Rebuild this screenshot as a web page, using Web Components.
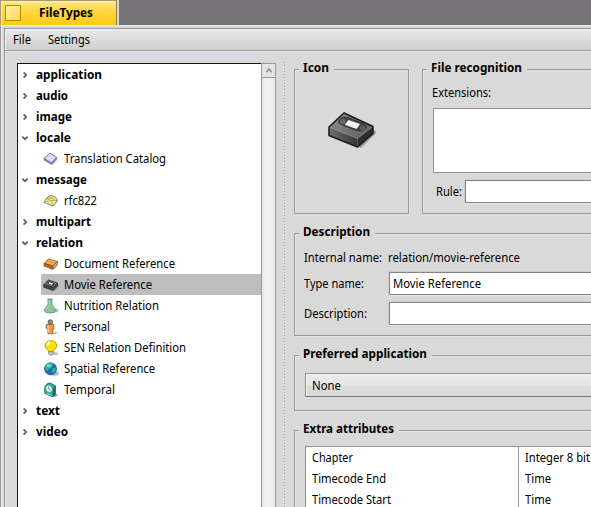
<!DOCTYPE html>
<html lang="en"><head><meta charset="utf-8"><title>FileTypes</title>
<style>
html,body{margin:0;height:507px;overflow:hidden}
body{font:12px/21px "Noto Sans","Open Sans",sans-serif;color:#000;background:#767477}
</style></head><body><ft-window></ft-window>
<script>
const define=(name,html,setup)=>customElements.define(name,class extends HTMLElement{
  connectedCallback(){
    if(this.shadowRoot)return;
    this.attachShadow({mode:'open'}).innerHTML=html;
    if(setup)setup.call(this,this.shadowRoot);
  }
});

// A label condensed horizontally to the width given in its w attribute.
define('ft-text','<style>:host{display:block;white-space:nowrap;flex:none}span{display:inline-block;transform-origin:0 50%;vertical-align:top}:host([b]){font-weight:700}</style><span><slot></slot></span>',function(r){
  const w=+this.getAttribute('w'),s=r.querySelector('span');
  this.style.width=w+'px';
  s.style.transform=`scaleX(${w/s.getBoundingClientRect().width})`;
});

const icons={
catalog:'<path d="M2 8 7 2 14 7 9 13Z" fill="#8d8da0" opacity=".45" transform="translate(1 1)"/><path d="M1 7.5 7 2 13.5 6.5 8.5 12Z" fill="#dcdcfb" stroke="#75759b"/><path d="M1 7.5 8.5 12 13.5 6.5V8L8.5 13.5 1 9Z" fill="#9b9bcc" stroke="#606080" stroke-width=".6"/>',
mail:'<path d="M3 9 15 8 10 14Z" fill="#999" opacity=".5"/><path d="M.8 9.3 3.5 5 8 2.3 12.5 4 14.5 7.5 9.8 13Z" fill="#eeee9a" stroke="#79794a" stroke-width=".9"/><path d="M1 9.3 8 7.5 9.8 13M8 7.5 14 7.5M4 5.5 10 4.2M4 7 8.5 5.5 12 6.5" fill="none" stroke="#a3a35b" stroke-width=".8"/>',
book:'<path d="M5 13 15 7 15 10 10 14Z" fill="#888" opacity=".5"/><path d="M1 7.5 5.5 3 14.5 5.5 10 10Z" fill="#e9a044" stroke="#875017" stroke-width=".8"/><path d="M1 7.5V10L9.7 13V10Z" fill="#c36d24" stroke="#784111" stroke-width=".7"/><path d="M10 10 14.5 5.5V8L10 13Z" fill="#e0b47c" stroke="#85531f" stroke-width=".7"/><path d="M4 6.5 10 8.5M7 4 12 6" stroke="#ffcc80" stroke-width=".6"/>',
tape:'<path d="M10 14 15.5 8V10L11 14Z" fill="#666" opacity=".5"/><path d="M.8 7.5 5.5 3 14.5 6 10.3 10.5Z" fill="#808080" stroke="#222" stroke-width=".8"/><path d="M.8 7.5V10.3L10 13.5 14.5 9V6L10.3 10.5Z" fill="#4a4a4a" stroke="#222" stroke-width=".7"/><ellipse cx="7.8" cy="6.5" rx="4" ry="1.7" transform="rotate(18 7.8 6.5)" fill="#444"/><path d="M6.4 5.3 10 6.4 9 7.8 5.6 6.7Z" fill="#eee"/>',
flask:'<ellipse cx="11.5" cy="12.5" rx="4" ry="2" fill="#777" opacity=".5"/><path d="M5 1.2H9V6.5L13 12.5Q11.5 15 7 15 2 15 1 12.5L5 6.5Z" fill="#8bc49e" stroke="#549370" stroke-width=".8"/><path d="M6.3 2V7L3 12" fill="none" stroke="#a9d7b6" stroke-width="1.2"/><path d="M4.3 1.2H9.7" stroke="#79a78b"/>',
person:'<path d="M8 14 15 12.8 13 15H6Z" fill="#777" opacity=".55"/><path d="M3.3 5.3H10.7L11 10 9.8 10.5V14.7H5V10.5L3 9Z" fill="#ee9840" stroke="#8e521a" stroke-width=".8"/><path d="M5.2 6V9.8L6 14" stroke="#ffc688" fill="none" stroke-width="1.3"/><circle cx="7.3" cy="3" r="2.3" fill="#97847a" stroke="#554b45" stroke-width=".7"/>',
bulb:'<ellipse cx="12" cy="13.5" rx="3" ry="1.5" fill="#888" opacity=".5"/><path d="M5.6 11.8C5.6 9.5 2 8.7 2 5.8A5.9 5.2 0 0 1 13.8 5.8C13.8 8.7 10.2 9.5 10.2 11.8Z" fill="#ffe200" stroke="#a88500" stroke-width=".8"/><path d="M4.5 5.5Q4.7 3 7 2.3" fill="none" stroke="#fffce0" stroke-width="2"/><path d="M5.7 11.7H10.3V14L8 15.5 5.7 14Z" fill="#c9c9c9" stroke="#777" stroke-width=".7"/>',
globe:'<ellipse cx="11.5" cy="12.3" rx="4.2" ry="2.5" fill="#888" opacity=".6"/><circle cx="7.5" cy="7.8" r="6" fill="#146ec1" stroke="#17477a" stroke-width=".7"/><path d="M2.5 4.8Q5 1 10 2.3L9 6 6.5 7.5 3.7 10 2 8ZM9 8 12.7 6.5Q13.5 9.5 11 11.8L8.5 11Z" fill="#27b98b"/><ellipse cx="5.7" cy="4.5" rx="2.4" ry="1.7" fill="#86efc6" opacity=".7"/>',
clock:'<path d="M8 14 14.5 11.5V14L11 15Z" fill="#777" opacity=".6"/><path d="M1.7 5Q3.5.8 7.3 1L12.5 3.8V12.5L10 15 1.7 11.3Z" fill="#32a398" stroke="#176b66" stroke-width=".8"/><path d="M9.8 6.3 12.5 4V12.5L10 15Z" fill="#17726c"/><ellipse cx="6" cy="6.8" rx="3.1" ry="3.7" transform="rotate(-20 6 6.8)" fill="#d9f4f5" stroke="#5b9da2" stroke-width=".7"/><path d="M5.8 4.5V7L7.6 8" fill="none" stroke="#667" stroke-width=".8"/><path d="M3.5 11.3 8.5 13.2" stroke="#8de1d3"/>'};
define('ft-icon','<style>:host{display:block;width:16px;height:16px;flex:none}svg{display:block}</style><svg width="16" height="16" viewBox="0 0 16 16"></svg>',function(r){r.querySelector('svg').innerHTML=icons[this.getAttribute('name')]});

// Collapsible category heading
define('ft-category','<style>:host{display:flex;align-items:center;height:21px;padding-left:3px}svg{width:8px;height:8px;margin-right:7px;flex:none}:host([open]) svg{transform:rotate(90deg)}</style><svg viewBox="0 0 8 8"><path d="M2.6 1.3 5.2 4 2.6 6.7" fill="none" stroke="#626262" stroke-width="1.8"/></svg><slot></slot>');
define('ft-type','<style>:host{display:flex;align-items:center;height:21px;margin-left:23px;padding-left:2px;gap:5px}:host([selected]){background:#bebebe}</style><ft-icon></ft-icon><slot></slot>',function(r){
  const i=document.createElement('ft-icon');i.setAttribute('name',this.getAttribute('icon'));r.querySelector('ft-icon').replaceWith(i)});

define('ft-tree',`<style>:host{display:flex;width:259px;flex:none}
.list{flex:1;background:#fff;border:solid #0000a0;border-width:1px 0 0 1px;border-left-color:#0000c0}
.bar{border:1px solid #999;border-bottom:0;display:flex;flex-direction:column;background:linear-gradient(90deg,#e6e6e6,#f3f3f3 40%,#e9e9e9);box-sizing:border-box;width:15px}
.up{height:13px;border-bottom:1px solid #999;display:grid;place-items:center;background:#e4e4e4}</style>
<div class="list">
<ft-category><ft-text b w="66">application</ft-text></ft-category>
<ft-category><ft-text b w="32">audio</ft-text></ft-category>
<ft-category><ft-text b w="36">image</ft-text></ft-category>
<ft-category open><ft-text b w="35">locale</ft-text></ft-category>
<ft-type icon="catalog"><ft-text w="102">Translation Catalog</ft-text></ft-type>
<ft-category open><ft-text b w="51">message</ft-text></ft-category>
<ft-type icon="mail"><ft-text w="33">rfc822</ft-text></ft-type>
<ft-category><ft-text b w="55">multipart</ft-text></ft-category>
<ft-category open><ft-text b w="47">relation</ft-text></ft-category>
<ft-type icon="book"><ft-text w="111">Document Reference</ft-text></ft-type>
<ft-type icon="tape" selected><ft-text w="88">Movie Reference</ft-text></ft-type>
<ft-type icon="flask"><ft-text w="95">Nutrition Relation</ft-text></ft-type>
<ft-type icon="person"><ft-text w="46">Personal</ft-text></ft-type>
<ft-type icon="bulb"><ft-text w="122">SEN Relation Definition</ft-text></ft-type>
<ft-type icon="globe"><ft-text w="91">Spatial Reference</ft-text></ft-type>
<ft-type icon="clock"><ft-text w="51">Temporal</ft-text></ft-type>
<ft-category><ft-text b w="24">text</ft-text></ft-category>
<ft-category><ft-text b w="32">video</ft-text></ft-category>
</div><div class="bar"><div class="up"><svg width="8" height="7" viewBox="0 0 8 7"><path d="M1.4 5.2 4 2 6.6 5.2" fill="none" stroke="#949494" stroke-width="1.8"/></svg></div></div>`);

define('ft-group','<style>:host{display:block;box-sizing:border-box;border:1px solid #989898;box-shadow:inset 1px 1px #e4e4e4,1px 1px #e4e4e4}.legend{position:relative;width:fit-content;margin:-13px 0 0 4px;padding:0 5px 0 4px;background:#d9d9d9;height:22px}</style><div class="legend"><slot name="title"></slot></div><slot></slot>');
define('ft-field','<style>:host{display:flex;align-items:center;box-sizing:border-box;height:23px;border:1px solid #858585;border-right:0;background:#fff;padding-left:3px;box-shadow:-1px -1px #cecece,0 1px #e8e8e8}</style><slot></slot>');
define('ft-menubar','<style>:host{display:flex;height:21px;border:1px solid #999;border-width:1px 0 1px 1px;background:linear-gradient(#e8e8e8,#cfcfcf);padding-left:8px;gap:17px;box-shadow:inset 1px 1px #f0f0f0;line-height:21px;flex:none}</style><slot></slot>');
define('ft-tab','<style>:host{display:flex;box-sizing:border-box;width:117px;height:25px;align-items:center;background:linear-gradient(#ffe98a,#ffd84a 35%,#ffcb0e);border:1px solid #a69a77;border-right:1px solid #8f7d3a;border-bottom:0;box-shadow:inset 1px 1px #fff1b0,2px 0 #d8d8d8;padding:0 0 0 4px;line-height:24px}i{width:14px;height:14px;border:1px solid #b78b0a;background:linear-gradient(135deg,#fff0a8,#ffd94d);box-shadow:inset 1px 1px #ffefa6;margin-right:18px}</style><i></i><ft-text b w="54">FileTypes</ft-text>');

define('ft-tape','<style>:host{display:block;width:50px;height:38px}</style><svg width="50" height="38" viewBox="0 0 50 38"><defs><linearGradient id="t" x1="0" y1="0" x2="1" y2="1"><stop stop-color="#929292"/><stop offset="1" stop-color="#5c5c5c"/></linearGradient><linearGradient id="f" x1="0" y1="0" x2="1" y2="0"><stop stop-color="#707070"/><stop offset="1" stop-color="#333"/></linearGradient></defs><path d="M30 36 48 19 49 22 34 37Z" fill="#777" opacity=".7"/><path d="M2 16 17 2 46 15.5 30.5 28Z" fill="url(#t)"/><path d="M2 16 30.5 27.5V36L2 24.5Z" fill="url(#f)"/><path d="M30.5 27.5 46 15.5V22.5L30.5 36Z" fill="#2c2c2c"/><path d="M2 16 30.5 27.5 46 15.5" fill="none" stroke="#999" stroke-width=".6"/><path d="M13 8Q16 5 21 6.5L36 12.5Q41 15 38.5 18 34.5 21.5 29 19.5L15 14Q9.5 11.5 13 8Z" fill="#434343" stroke="#303030" stroke-width=".8"/><ellipse cx="16" cy="10.3" rx="3" ry="2.6" fill="#686868"/><ellipse cx="35.5" cy="17" rx="2.8" ry="2.6" fill="#5d5d5d"/><path d="M21.5 9 33 13 29.5 18 17.8 13.8Z" fill="#f4f4f4"/><path d="M2 16 17 2 46 15.5V22.5L30.5 36 2 24.5Z" fill="none" stroke="#181818" stroke-width="1.5" stroke-linejoin="round"/></svg>');

define('ft-panel',`<style>:host{display:flex;flex-direction:column;flex:1;min-width:0;padding-top:6px}
.row{display:flex;align-items:center}.top{display:flex;gap:13px;height:145px;flex:none}
.icon{width:115px}.icon ft-tape{margin:32px 0 0 32px}.file{flex:1;border-right:0}
.area{height:65px;box-sizing:border-box;border:1px solid #929292;border-right:0;background:#fff;margin:5px 0 7px 10px}
ft-field{flex:1}.desc{flex:none;height:103px;margin-top:19px;border-right:0}.pref{flex:none;height:56px;margin-top:19px;border-right:0}.attrs{flex:1;margin-top:19px;border-right:0;display:flex;flex-direction:column}
.choice{display:flex;align-items:center;height:22px;border:1px solid #929292;border-width:1px 0 1px 1px;border-bottom-color:#777;background:linear-gradient(#eaeaea,#e6e6e6 55%,#dcdcdc 56%,#d9d9d9);box-shadow:inset 1px 1px #f3f3f3;padding-left:6px;margin:8px 0 0 10px}
.table{flex:1;display:grid;grid-template-columns:212px 1fr;border:1px solid #929292;border-width:1px 0 0 1px;background:#fff;margin:6px 0 0 10px}.table div{padding-left:6px}.table div+div{border-left:1px solid #999}</style>
<div class="top"><ft-group class="icon"><ft-text slot="title" b w="26">Icon</ft-text><ft-tape></ft-tape></ft-group>
<ft-group class="file"><ft-text slot="title" b w="91">File recognition</ft-text><ft-text w="59" style="margin:3px 0 0 9px">Extensions:</ft-text><div class="area"></div><div class="row"><ft-text w="26" style="margin:0 3px 0 13px">Rule:</ft-text><ft-field></ft-field></div></ft-group></div>
<ft-group class="desc"><ft-text slot="title" b w="67">Description</ft-text>
<div class="row" style="margin:4px 0 0 9px"><ft-text w="78" style="margin-right:6px">Internal name:</ft-text><ft-text w="132">relation/movie-reference</ft-text></div>
<div class="row" style="margin:4px 0 0 9px"><ft-text w="60" style="margin-right:25px">Type name:</ft-text><ft-field><ft-text w="88">Movie Reference</ft-text></ft-field></div>
<div class="row" style="margin:7px 0 0 9px"><ft-text w="63" style="margin-right:22px">Description:</ft-text><ft-field></ft-field></div></ft-group>
<ft-group class="pref"><ft-text slot="title" b w="124">Preferred application</ft-text><div class="choice"><ft-text w="29">None</ft-text></div></ft-group>
<ft-group class="attrs"><ft-text slot="title" b w="91">Extra attributes</ft-text><div class="table"><div><ft-text w="41">Chapter</ft-text><ft-text w="74">Timecode End</ft-text><ft-text w="79">Timecode Start</ft-text></div><div><ft-text w="65">Integer 8 bit</ft-text><ft-text w="26">Time</ft-text><ft-text w="26">Time</ft-text></div></div></ft-group>`);

define('ft-splitter','<style>:host{display:flex;width:2px;margin:-1px 8px 0;flex:none}i{width:1px;background:repeating-linear-gradient(#a2a2a2 0 1px,#dcdcdc 1px 3px)}i+i{background:repeating-linear-gradient(#d9d9d9 0 1px,#ededed 1px 2px,#d9d9d9 2px 3px)}</style><i></i><i></i>');

define('ft-window',`<style>:host{display:flex;flex-direction:column;height:507px}
.frame{flex:1;min-height:0;display:flex;flex-direction:column;background:#d9d9d9;border-left:1px solid #999;border-top:1px solid #ededed;padding:2px 0 0 3px;box-shadow:inset 1px 0 #efefef}
.body{flex:1;min-height:0;display:flex;border-left:1px solid #999;padding:12px 0 0 12px;box-shadow:inset 1px 1px #e8e8e8}</style>
<ft-tab></ft-tab><div class="frame"><ft-menubar><ft-text w="18">File</ft-text><ft-text w="42">Settings</ft-text></ft-menubar><div class="body"><ft-tree></ft-tree><ft-splitter></ft-splitter><ft-panel></ft-panel></div></div>`);
</script></body></html>
